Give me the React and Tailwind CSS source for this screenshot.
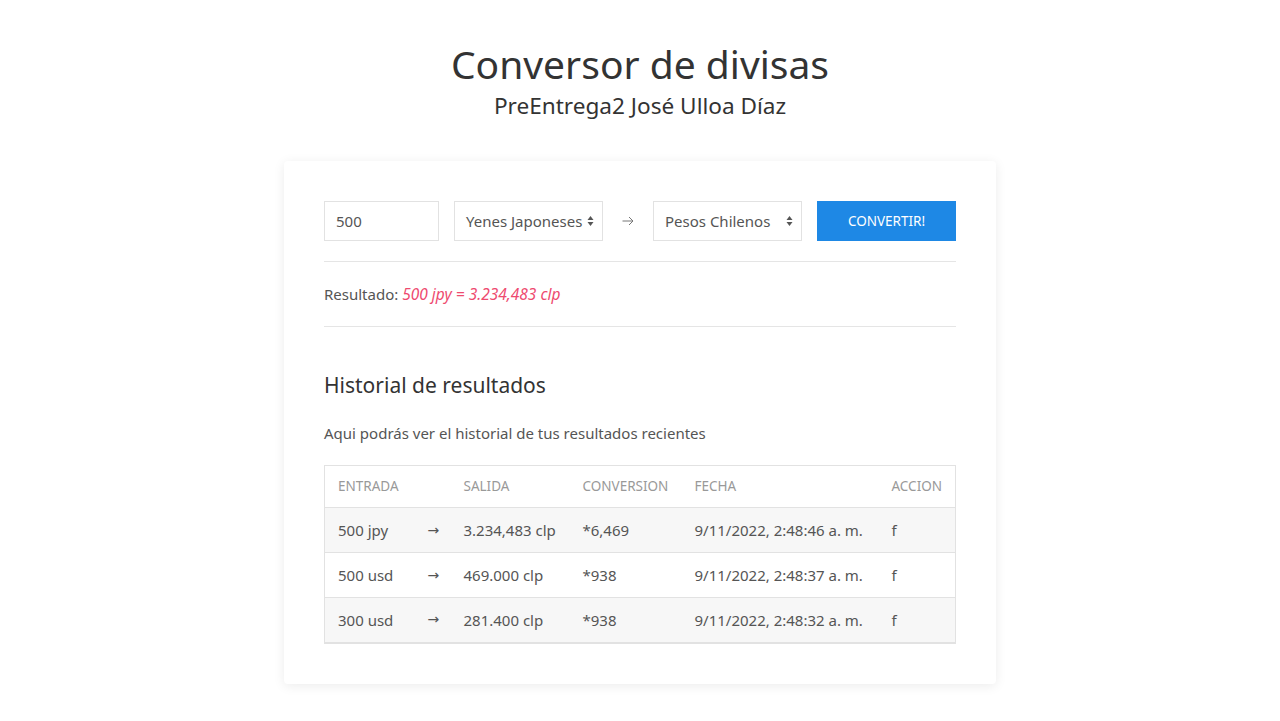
import React from 'react';

const rows = [
  { entrada: '500 jpy', salida: '3.234,483 clp', conversion: '*6,469', fecha: '9/11/2022, 2:48:46 a. m.' },
  { entrada: '500 usd', salida: '469.000 clp', conversion: '*938', fecha: '9/11/2022, 2:48:37 a. m.' },
  { entrada: '300 usd', salida: '281.400 clp', conversion: '*938', fecha: '9/11/2022, 2:48:32 a. m.' },
];

const SelectArrows = () => (
  <svg width="7" height="12" viewBox="0 0 7 12" className="shrink-0">
    <path d="M3.5 1 L6.5 5 L0.5 5 Z" fill="#555" />
    <path d="M3.5 11 L6.5 7 L0.5 7 Z" fill="#555" />
  </svg>
);

const App = () => {
  return (
    <div className="min-h-[721px] bg-white text-[#555] font-['Noto_Sans',sans-serif] pt-[38px]">
      {/* Header */}
      <div className="text-center text-[#333]">
        <h1 className="text-[39px] leading-[52px]">Conversor de divisas</h1>
        <h2 className="text-[22.6px] leading-[30px] mt-[1px]">PreEntrega2 José Ulloa Díaz</h2>
      </div>

      {/* Card */}
      <div className="mx-auto mt-[40px] w-[712px] bg-white rounded-[4px] shadow-[0_2px_12px_rgba(0,0,0,0.08)] px-[40px] pt-[40px] pb-[40px]">
        <div className="flex items-center h-[40px] text-[15px]">
          <div className="w-[115px] h-[40px] border border-[#e2e2e2] flex items-center px-[11px]">500</div>
          <div className="ml-[15px] w-[149px] h-[40px] border border-[#e2e2e2] flex items-center justify-between pl-[11px] pr-[8px]">
            <span>Yenes Japoneses</span>
            <SelectArrows />
          </div>
          <div className="w-[50px] flex justify-center text-[#777]">
            <svg width="12" height="10" viewBox="0 0 12 10">
              <path d="M0.5 5 H11 M7 1 L11 5 L7 9" stroke="#777" strokeWidth="1" fill="none" />
            </svg>
          </div>
          <div className="w-[149px] h-[40px] border border-[#e2e2e2] flex items-center justify-between pl-[11px] pr-[8px]">
            <span>Pesos Chilenos</span>
            <SelectArrows />
          </div>
          <button className="ml-[15px] w-[139px] h-[40px] bg-[#1e88e5] text-white text-[13.5px]">CONVERTIR!</button>
        </div>

        <div className="border-t border-[#e5e5e5] mt-[20px]" />

        <p className="text-[15px] py-[22px] leading-[20px]">
          Resultado: <span className="italic text-[#ee4a6f] text-[15.5px]">500 jpy = 3.234,483 clp</span>
        </p>

        <div className="border-t border-[#e5e5e5]" />

        <h3 className="text-[21px] text-[#333] mt-[43px] leading-[30px]">Historial de resultados</h3>
        <p className="text-[15px] mt-[23px] leading-[20px]">Aqui podrás ver el historial de tus resultados recientes</p>

        <table className="w-full table-fixed mt-[22px] border border-[#e2e2e2] border-b-2 text-[15px] border-collapse">
          <thead>
            <tr className="h-[42px] text-[13.5px] text-[#999] text-left">
              <th className="font-normal pl-[13px] w-[103px]">ENTRADA</th>
              <th className="font-normal w-[36px]"></th>
              <th className="font-normal w-[119px]">SALIDA</th>
              <th className="font-normal w-[112px]">CONVERSION</th>
              <th className="font-normal w-[197px]">FECHA</th>
              <th className="font-normal">ACCION</th>
            </tr>
          </thead>
          <tbody>
            {rows.map((r, i) => (
              <tr key={i} className={`h-[45px] border-t border-[#e2e2e2] ${i % 2 === 0 ? 'bg-[#f7f7f7]' : 'bg-white'}`}>
                <td className="pl-[13px]">{r.entrada}</td>
                <td className="font-['DejaVu_Sans',sans-serif] text-[14px]">→</td>
                <td>{r.salida}</td>
                <td>{r.conversion}</td>
                <td>{r.fecha}</td>
                <td>f</td>
              </tr>
            ))}
          </tbody>
        </table>
      </div>
    </div>
  );
};

export default App;
